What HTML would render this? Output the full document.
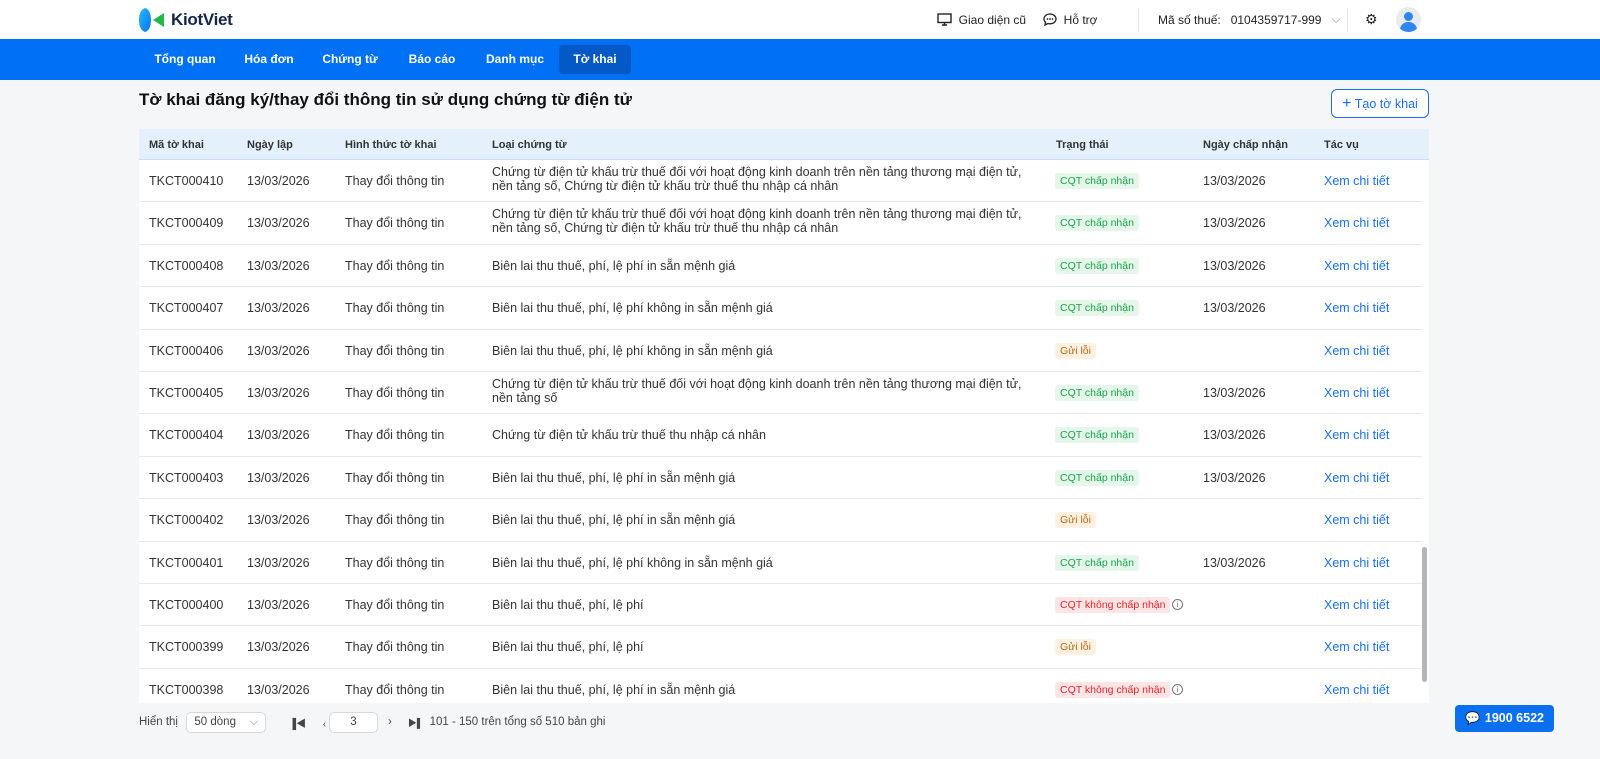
<!DOCTYPE html>
<html><head><meta charset="utf-8"><style>
*{box-sizing:border-box;margin:0;padding:0}
body{width:1600px;height:759px;overflow:hidden;background:#f5f6f8;font-family:"Liberation Sans","Noto Sans CJK SC",sans-serif;color:#1f2328;position:relative}
.top{height:39px;background:#fff;position:relative}
.logo{position:absolute;left:139px;top:7px;display:flex;align-items:center}
.logo b{font-size:17px;color:#13264a;margin-left:6px;letter-spacing:-0.3px}
.tr{position:absolute;top:0;height:39px;display:flex;align-items:center;font-size:12px;color:#222}
.nav{height:41px;background:#0070f4;position:relative}
.nav a{position:absolute;top:6px;height:29px;line-height:29px;color:#fff;font-size:12px;font-weight:bold;text-align:center}
h1{position:absolute;left:139px;top:90px;font-size:17px;font-weight:bold;color:#111}
.btn{position:absolute;left:1331px;top:89px;width:98px;height:29px;border:1px solid #1a6ff0;border-radius:6px;background:#fff;color:#1a6ff0;font-size:12.5px;line-height:27px;text-align:center}
.tbl{position:absolute;left:139px;top:129px;width:1290px;height:574px;background:#fff;overflow:hidden}
.hd{height:31px;background:#e5f0fd;border-bottom:1px solid #c9dcf7;position:relative;font-size:11px;font-weight:bold;color:#333}
.hd span,.row span{position:absolute}
.hd span{top:10px}
.row{height:42.4px;border-bottom:1px solid #e8e8e8;position:relative;font-size:12.5px;color:#333}
.row span{top:14px}
.row .ty{top:5px;line-height:14px;width:545px}
.row .ty.one{top:14px}
.tag{font-size:10.5px;padding:2px 5px;border-radius:3px;top:13px !important}
.g{background:#e5f7ea;color:#1aa34a}.o{background:#fff1e1;color:#b46a10}.r{background:#fde5e5;color:#e8232b}
.lk{color:#1a6ff0}
.info{display:inline-block;width:11px;height:11px;border:1px solid #777;border-radius:50%;font-size:8px;line-height:9px;text-align:center;color:#777;left:1033px;top:15px!important}
.sb{position:absolute;left:1422px;top:547px;width:5px;height:135px;background:#b5b5b5;border-radius:3px}
.pg{position:absolute;top:711px;height:22px;font-size:11.5px;color:#444;display:flex;align-items:center}
.hot{position:absolute;left:1455px;top:705px;width:99px;height:27px;background:#0a70f0;border-radius:4px;color:#fff;font-weight:bold;font-size:12.5px;line-height:27px;text-align:right;padding-right:10px}
</style></head><body>
<div class="top">
 <div class="logo"><svg width="26" height="26" viewBox="0 0 26 26"><defs><linearGradient id="lg" x1="0" y1="0" x2="1" y2="1"><stop offset="0" stop-color="#23c0ff"/><stop offset="1" stop-color="#0a6ef0"/></linearGradient></defs><path d="M6 1C1 3 0 8 0 13s1 10 6 12c4-1 6-6 6-12S10 2 6 1z" fill="url(#lg)"/><path d="M25 6 14 13l11 7z" fill="#22b84a"/></svg><b>KiotViet</b></div>
 <div class="tr" style="left:937px"><svg width="15" height="13" viewBox="0 0 15 13"><rect x="1" y="1" width="13" height="8.5" fill="none" stroke="#222" stroke-width="1.4"/><path d="M5 12h5M7.5 10v2" stroke="#222" stroke-width="1.4"/></svg>&nbsp;&nbsp;Giao diện cũ</div>
 <div class="tr" style="left:1043px"><svg width="14" height="13" viewBox="0 0 14 13"><path d="M7 1C3.5 1 1 3 1 6c0 1.5.6 2.6 1.6 3.4L2 12l3-1.5c.6.2 1.3.3 2 .3 3.5 0 6-2.2 6-4.8S10.5 1 7 1z" fill="none" stroke="#222" stroke-width="1.3"/><circle cx="4.5" cy="6" r=".9" fill="#222"/><circle cx="7" cy="6" r=".9" fill="#222"/><circle cx="9.5" cy="6" r=".9" fill="#222"/></svg>&nbsp;&nbsp;Hỗ trợ</div>
 <div style="position:absolute;left:1138px;top:8px;width:1px;height:24px;background:#e3e3e3"></div>
 <div class="tr" style="left:1158px">Mã số thuế:&nbsp;&nbsp;&nbsp;0104359717-999&nbsp;&nbsp;&nbsp;<span style="color:#999">⌵</span></div>
 <div style="position:absolute;left:1347px;top:8px;width:1px;height:24px;background:#e3e3e3"></div>
 <div class="tr" style="left:1365px;font-size:14px">⚙</div>
 <div style="position:absolute;left:1396px;top:7px;width:25px;height:25px;border-radius:50%;background:#e8ecf2;overflow:hidden"><div style="position:absolute;left:8px;top:5px;width:9px;height:9px;border-radius:50%;background:#2f86f0"></div><div style="position:absolute;left:4px;top:15px;width:17px;height:12px;border-radius:8px 8px 0 0;background:#2f86f0"></div></div>
</div>
<div class="nav">
 <a style="left:148px;width:74px">Tổng quan</a>
 <a style="left:235px;width:68px">Hóa đơn</a>
 <a style="left:315px;width:70px">Chứng từ</a>
 <a style="left:400px;width:64px">Báo cáo</a>
 <a style="left:476px;width:78px">Danh mục</a>
 <a style="left:559px;width:72px;background:#0559c7;border-radius:4px">Tờ khai</a>
</div>
<h1>Tờ khai đăng ký/thay đổi thông tin sử dụng chứng từ điện tử</h1>
<div class="btn"><span style="font-size:16px">+</span> Tạo tờ khai</div>
<div class="tbl">
 <div class="hd"><span style="left:10px">Mã tờ khai</span><span style="left:108px">Ngày lập</span><span style="left:206px">Hình thức tờ khai</span><span style="left:353px">Loại chứng từ</span><span style="left:917px">Trạng thái</span><span style="left:1064px">Ngày chấp nhận</span><span style="left:1185px">Tác vụ</span></div>
 <div id="rows"></div>
 <div style="position:absolute;left:1283px;top:31px;width:7px;height:543px;background:#fff"></div>
</div>
<div class="sb"></div>
<div class="pg" style="left:139px">Hiển thị&nbsp;&nbsp;<span style="display:inline-block;width:80px;height:21px;border:1px solid #d8d8d8;border-radius:5px;background:#fff;padding-left:7px;line-height:19px;margin-left:2px">50 dòng <span style="color:#999;float:right;margin-right:7px">⌵</span></span></div>
<div class="pg" style="left:289px;font-size:10px">▐◀&nbsp;&nbsp;&nbsp;&nbsp;&nbsp;&nbsp;‹</div>
<div class="pg" style="left:329px"><span style="display:inline-block;width:49px;height:21px;border:1px solid #d8d8d8;border-radius:5px;background:#fff;text-align:center;line-height:19px">3</span></div>
<div class="pg" style="left:388px">›&nbsp;&nbsp;&nbsp;&nbsp;&nbsp;<span style="font-size:9px">▶▌</span>&nbsp;&nbsp;101 - 150 trên tổng số 510 bản ghi</div>
<div class="hot"><span style="position:absolute;left:10px;top:0;font-size:12px">💬</span>1900 6522</div>
<script>
var L1="Chứng từ điện tử khấu trừ thuế đối với hoạt động kinh doanh trên nền tảng thương mại điện tử, nền tảng số, Chứng từ điện tử khấu trừ thuế thu nhập cá nhân";
var L2="Chứng từ điện tử khấu trừ thuế đối với hoạt động kinh doanh trên nền tảng thương mại điện tử, nền tảng số";
var A="Biên lai thu thuế, phí, lệ phí in sẵn mệnh giá",B="Biên lai thu thuế, phí, lệ phí không in sẵn mệnh giá",C="Biên lai thu thuế, phí, lệ phí";
var d=[[410,L1,"g"],[409,L1,"g"],[408,A,"g"],[407,B,"g"],[406,B,"o"],[405,L2,"g"],[404,"Chứng từ điện tử khấu trừ thuế thu nhập cá nhân","g"],[403,A,"g"],[402,A,"o"],[401,B,"g"],[400,C,"r"],[399,C,"o"],[398,A,"r"]];
var h="";d.forEach(function(r){var two=r[1].length>60;var t={g:"CQT chấp nhận",o:"Gửi lỗi",r:"CQT không chấp nhận"}[r[2]];
h+='<div class="row"><span style="left:10px">TKCT000'+r[0]+'</span><span style="left:108px">13/03/2026</span><span style="left:206px">Thay đổi thông tin</span><span class="ty'+(two?'':' one')+'" style="left:353px">'+r[1]+'</span><span class="tag '+r[2]+'" style="left:916px">'+t+'</span>'+(r[2]=="r"?'<span class="info">i</span>':'')+(r[2]=="g"?'<span style="left:1064px">13/03/2026</span>':'')+'<span class="lk" style="left:1185px">Xem chi tiết</span></div>';});
document.getElementById("rows").innerHTML=h;
</script>
</body></html>
